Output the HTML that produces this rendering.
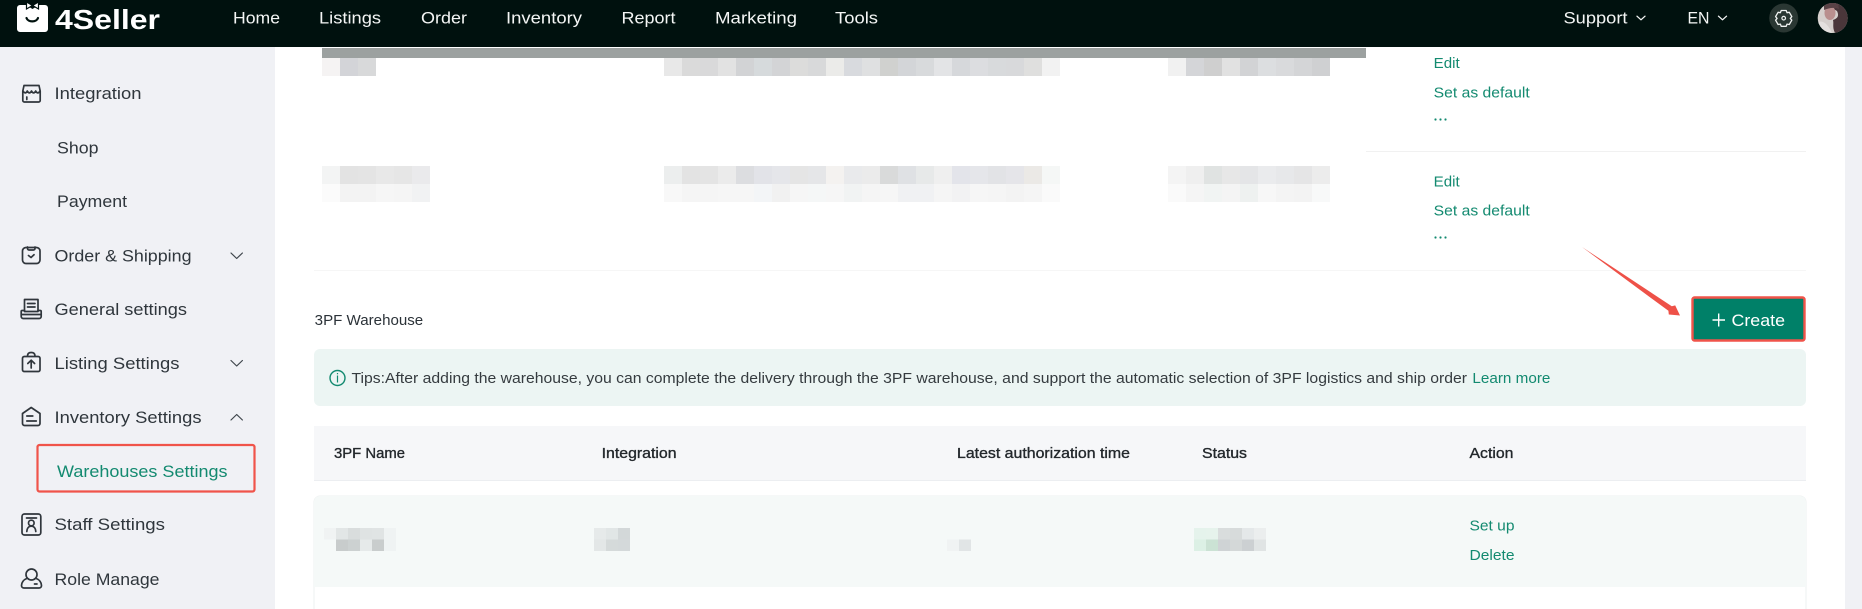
<!DOCTYPE html>
<html lang="en"><head><meta charset="utf-8"><title>4Seller</title>
<style>
html,body{margin:0;padding:0;background:#fff;width:1862px;height:609px;overflow:hidden}
svg{display:block}
text{font-family:"Liberation Sans",Arial,sans-serif;font-size:15px;fill:#2b3238}
.nav text{font-size:17px;fill:#f4f6f5}
.side text{font-size:17px;fill:#2f363c}
.g text,text.g{fill:#138a70}
.th text{fill:#23282c;font-size:15px;stroke:#23282c;stroke-width:.35px}
.b rect{width:18px;height:18px}
.c rect{width:12px;height:11.5px}
.ic{fill:none;stroke:#30363c;stroke-width:1.7;stroke-linecap:round;stroke-linejoin:round}
</style></head><body>
<svg width="1862" height="609" viewBox="0 0 1862 609" xmlns="http://www.w3.org/2000/svg">
<rect width="1862" height="609" fill="#fff"/>
<rect y="47" width="275" height="562" fill="#f0f1f5"/>
<rect x="1845" y="47" width="17" height="562" fill="#f0f1f5"/>
<rect width="1862" height="47" fill="#00110e"/>

<!-- logo -->
<path d="M20 5h6l6.500 4 6.500-4h6a3 3 0 0 1 3 3v21a3 3 0 0 1-3 3H20a3 3 0 0 1-3-3V8a3 3 0 0 1 3-3z" fill="#fff"/>
<path d="M26.500 2l6 3.500 6-3.500v7l-6-3.500-6 3.500z" fill="#fff" stroke="#00110e" stroke-width="1.200"/>
<path d="M26.500 18c1.500 4.500 10 4.500 11.500 0" fill="none" stroke="#00110e" stroke-width="2.200" stroke-linecap="round"/>
<text x="55" y="29" textLength="105" lengthAdjust="spacingAndGlyphs" style="font-size:28px;font-weight:bold;fill:#fff">4Seller</text>

<g class="nav">
<text x="233" y="23.500" textLength="47" lengthAdjust="spacingAndGlyphs">Home</text>
<text x="319" y="23.500" textLength="62" lengthAdjust="spacingAndGlyphs">Listings</text>
<text x="421" y="23.500" textLength="46" lengthAdjust="spacingAndGlyphs">Order</text>
<text x="506" y="23.500" textLength="76" lengthAdjust="spacingAndGlyphs">Inventory</text>
<text x="621.500" y="23.500" textLength="54" lengthAdjust="spacingAndGlyphs">Report</text>
<text x="715" y="23.500" textLength="82" lengthAdjust="spacingAndGlyphs">Marketing</text>
<text x="835" y="23.500" textLength="43" lengthAdjust="spacingAndGlyphs">Tools</text>
<text x="1563.500" y="23.500" textLength="64" lengthAdjust="spacingAndGlyphs">Support</text>
<text x="1687.500" y="23.500" textLength="22" lengthAdjust="spacingAndGlyphs">EN</text>
</g>
<path d="M1637 16.200l4 3.600 4-3.600M1718.500 16.200l4 3.600 4-3.600" fill="none" stroke="#f4f6f5" stroke-width="1.300" stroke-linecap="round" stroke-linejoin="round"/>

<!-- gear -->
<circle cx="1783.700" cy="18" r="14.500" fill="#2a3733"/>
<path d="M1781.200 10.500h5l.8 2.200 2.300-.4 2.500 4.300-1.500 1.800 1.500 1.800-2.500 4.300-2.300-.4-.8 2.200h-5l-.8-2.200-2.300.4-2.500-4.300 1.500-1.800-1.500-1.800 2.500-4.300 2.300.4z" fill="none" stroke="#f0f2f1" stroke-width="1.300" stroke-linejoin="round"/>
<circle cx="1783.700" cy="18.200" r="1.800" fill="none" stroke="#f0f2f1" stroke-width="1.200"/>

<!-- avatar -->
<clipPath id="av"><circle cx="1832.700" cy="18" r="15"/></clipPath>
<g clip-path="url(#av)">
<rect x="1817" y="3" width="31" height="30" fill="#d5cfcc"/>
<path d="M1826 3h22v30h-13c-3-6-1-9-2-13 3-1 7-3 4-9-3-2-8-3-11-8z" fill="#4a363a"/>
<ellipse cx="1830" cy="13" rx="5.500" ry="7" fill="#b98f8e"/>
<path d="M1824 3h14l1 6c-5-2-10-1-15 1z" fill="#5a4246"/>
<path d="M1818 22c5-2 10 2 14 11h-14z" fill="#e4e0de"/>
</g>

<!-- top table: grey bar and mosaic -->
<rect x="322" y="48" width="1044" height="10" fill="#9ca1a0"/>
<g class="b" transform="translate(0,58)">
<rect x="322" fill="#f5f3f3"/><rect x="340" fill="#d3d4d8"/><rect x="358" fill="#d8d9da"/>
<rect x="664" fill="#e8e8e8"/><rect x="682" fill="#dadada"/><rect x="700" fill="#d9d9da"/><rect x="718" fill="#e2e2e2"/><rect x="736" fill="#d2d3d5"/><rect x="754" fill="#d6dadc"/><rect x="772" fill="#d3d4d6"/><rect x="790" fill="#dcdcdb"/><rect x="808" fill="#d8d9da"/><rect x="826" fill="#ebebe9"/><rect x="844" fill="#d8dade"/><rect x="862" fill="#dfe0e1"/><rect x="880" fill="#d0d1cf"/><rect x="898" fill="#d3d5d8"/><rect x="916" fill="#d8dadc"/><rect x="934" fill="#e3e4e6"/><rect x="952" fill="#d6d8db"/><rect x="970" fill="#dcdde0"/><rect x="988" fill="#d8dadc"/><rect x="1006" fill="#d8d9db"/><rect x="1024" fill="#dfdfde"/><rect x="1042" fill="#f2f2f2"/>
<rect x="1168" fill="#f1f1f1"/><rect x="1186" fill="#d4d5d8"/><rect x="1204" fill="#cfcfcf"/><rect x="1222" fill="#e1e1e1"/><rect x="1240" fill="#d2d3d5"/><rect x="1258" fill="#dcdee0"/><rect x="1276" fill="#d9dadc"/><rect x="1294" fill="#d4d5d7"/><rect x="1312" fill="#cfd0d2"/>
</g>
<g class="b" transform="translate(0,166)">
<rect x="322" fill="#f3f4f4"/><rect x="340" fill="#e3e3e3"/><rect x="358" fill="#e4e4e4"/><rect x="376" fill="#e8e8e8"/><rect x="394" fill="#e6e6e6"/><rect x="412" fill="#eaeaec"/>
<rect x="664" fill="#eceeee"/><rect x="682" fill="#e3e3e3"/><rect x="700" fill="#e4e4e4"/><rect x="718" fill="#ebebeb"/><rect x="736" fill="#dcdde0"/><rect x="754" fill="#e2e3e8"/><rect x="772" fill="#e5e6ea"/><rect x="790" fill="#e5e5e5"/><rect x="808" fill="#e5e6e8"/><rect x="826" fill="#f4f2f0"/><rect x="844" fill="#e9eaec"/><rect x="862" fill="#ebebeb"/><rect x="880" fill="#d9dada"/><rect x="898" fill="#dfe1e4"/><rect x="916" fill="#e7e9e9"/><rect x="934" fill="#efefef"/><rect x="952" fill="#e3e4ea"/><rect x="970" fill="#e5e6ea"/><rect x="988" fill="#e2e3e6"/><rect x="1006" fill="#e5e5e9"/><rect x="1024" fill="#ebe9e6"/><rect x="1042" fill="#f5f7f6"/>
<rect x="1168" fill="#f4f4f4"/><rect x="1186" fill="#efefef"/><rect x="1204" fill="#e0e3e2"/><rect x="1222" fill="#e7e7e7"/><rect x="1240" fill="#e4e5e7"/><rect x="1258" fill="#eaebed"/><rect x="1276" fill="#e7e8ea"/><rect x="1294" fill="#e5e5e6"/><rect x="1312" fill="#ececec"/>
</g>
<g class="b" transform="translate(0,184)">
<rect x="322" fill="#fbfbfb"/><rect x="340" fill="#f3f3f3"/><rect x="358" fill="#f3f3f3"/><rect x="376" fill="#f6f6f6"/><rect x="394" fill="#f5f5f5"/><rect x="412" fill="#f1f2f3"/>
<rect x="664" fill="#f8f8f8"/><rect x="682" fill="#f5f5f5"/><rect x="700" fill="#f5f5f5"/><rect x="718" fill="#f6f6f6"/><rect x="736" fill="#f6f6f6"/><rect x="754" fill="#f3f5f7"/><rect x="772" fill="#f1f1f1"/><rect x="790" fill="#f6f6f6"/><rect x="808" fill="#f5f7f7"/><rect x="826" fill="#f6f6f6"/><rect x="844" fill="#f1f3f3"/><rect x="862" fill="#f5f5f5"/><rect x="880" fill="#f6f6f6"/><rect x="898" fill="#f0f1f3"/><rect x="916" fill="#f0f1f3"/><rect x="934" fill="#f5f5f5"/><rect x="952" fill="#f2f2f3"/><rect x="970" fill="#f6f6f6"/><rect x="988" fill="#f5f5f5"/><rect x="1006" fill="#f3f3f3"/><rect x="1024" fill="#f5f5f5"/><rect x="1042" fill="#fafafa"/>
<rect x="1168" fill="#fafafa"/><rect x="1186" fill="#f5f5f5"/><rect x="1204" fill="#f1f4f3"/><rect x="1222" fill="#f4f4f4"/><rect x="1240" fill="#eef1f0"/><rect x="1258" fill="#f7f7f7"/><rect x="1276" fill="#f4f4f4"/><rect x="1294" fill="#f3f3f3"/><rect x="1312" fill="#f8f9f9"/>
</g>

<g class="g">
<text x="1433.700" y="68" textLength="26" lengthAdjust="spacingAndGlyphs">Edit</text>
<text x="1433.700" y="97.500" textLength="96" lengthAdjust="spacingAndGlyphs">Set as default</text>
<text x="1433.700" y="186.500" textLength="26" lengthAdjust="spacingAndGlyphs">Edit</text>
<text x="1433.700" y="215.500" textLength="96" lengthAdjust="spacingAndGlyphs">Set as default</text>
</g>
<g fill="#138a70">
<circle cx="1435.500" cy="119.500" r="1.100"/><circle cx="1440.500" cy="119.500" r="1.100"/><circle cx="1445.500" cy="119.500" r="1.100"/>
<circle cx="1435.500" cy="237.500" r="1.100"/><circle cx="1440.500" cy="237.500" r="1.100"/><circle cx="1445.500" cy="237.500" r="1.100"/>
</g>
<rect x="1366" y="151" width="440" height="1" fill="#f1f1f1"/>
<rect x="314" y="270" width="1492" height="1" fill="#f6f6f6"/>

<!-- 3PF section -->
<text x="314.700" y="325" textLength="108.500" lengthAdjust="spacingAndGlyphs">3PF Warehouse</text>

<!-- arrow -->
<path d="M1582 247L1671.800 306.200 1675.200 305.400 1680 315.500 1668.800 314.500 1668.400 310.800z" fill="#ee5148"/>

<!-- create button -->
<rect x="1692.500" y="297.500" width="112" height="43" rx="2" fill="#008068" stroke="#f0544a" stroke-width="2.400"/>
<path d="M1712.500 320h12.500M1718.700 313.500v13" stroke="#fff" stroke-width="1.400" fill="none"/>
<text x="1731.500" y="326" textLength="53.500" lengthAdjust="spacingAndGlyphs" style="font-size:17px;fill:#fff">Create</text>

<!-- alert -->
<rect x="314" y="349" width="1492" height="57" rx="6" fill="#ecf5f3"/>
<circle cx="337.500" cy="378" r="7.500" fill="none" stroke="#138a70" stroke-width="1.400"/>
<path d="M337.500 375.500v7M337.500 373v1.200" stroke="#138a70" stroke-width="1.200" fill="none"/>
<text x="351.500" y="383" textLength="1115.500" lengthAdjust="spacingAndGlyphs" style="fill:#353b3f">Tips:After adding the warehouse, you can complete the delivery through the 3PF warehouse, and support the automatic selection of 3PF logistics and ship order</text>
<text class="g" x="1472.400" y="383" textLength="78" lengthAdjust="spacingAndGlyphs">Learn more</text>

<!-- table header -->
<rect x="314" y="426" width="1492" height="54" fill="#f6f7f9"/>
<rect x="314" y="480" width="1492" height="1" fill="#eceef1"/>
<g class="th">
<text x="334" y="458" textLength="71" lengthAdjust="spacingAndGlyphs">3PF Name</text>
<text x="601.600" y="458" textLength="75" lengthAdjust="spacingAndGlyphs">Integration</text>
<text x="957" y="458" textLength="173" lengthAdjust="spacingAndGlyphs">Latest authorization time</text>
<text x="1202" y="458" textLength="45" lengthAdjust="spacingAndGlyphs">Status</text>
<text x="1469.500" y="458" textLength="44" lengthAdjust="spacingAndGlyphs">Action</text>
</g>

<!-- row -->
<path d="M314 609V502a6 6 0 0 1 6-6h1480a6 6 0 0 1 6 6v107" fill="#fff" stroke="#eef1f1" stroke-width="1"/>
<path d="M314 587V502a6 6 0 0 1 6-6h1480a6 6 0 0 1 6 6v85z" fill="#f5f9f8"/>
<g class="c" transform="translate(0,528)">
<rect x="324" fill="#f0f3f3"/><rect x="336" fill="#e2e6e6"/><rect x="348" fill="#d9dddd"/><rect x="360" fill="#dfe3e3"/><rect x="372" fill="#e0e4e4"/><rect x="384" width="10" fill="#eff3f3"/>
<rect x="594" fill="#e6eaea"/><rect x="606" fill="#e1e6e6"/><rect x="618" fill="#d3d8d9"/>
<rect x="1194" fill="#e5f3ec"/><rect x="1206" fill="#e6f3ec"/><rect x="1218" fill="#d9dddd"/><rect x="1230" fill="#d7dbdb"/><rect x="1242" fill="#e4e8e9"/><rect x="1254" fill="#ebeeee"/>
</g>
<g class="c" transform="translate(0,539.500)">
<rect x="336" fill="#c8cccc"/><rect x="348" fill="#ccd1d1"/><rect x="360" fill="#e6eaea"/><rect x="372" fill="#c9cdcd"/><rect x="384" fill="#eff3f3"/>
<rect x="594" fill="#e3e7e7"/><rect x="606" fill="#d5dada"/><rect x="618" fill="#d4d9da"/>
<rect x="947" fill="#f0f3f3"/><rect x="959" fill="#e1e5e6"/>
<rect x="1194" fill="#dcf0e5"/><rect x="1206" fill="#cbe2d4"/><rect x="1218" fill="#cfd3d5"/><rect x="1230" fill="#d4d8d8"/><rect x="1242" fill="#ccd0d2"/><rect x="1254" fill="#e0e4e4"/>
</g>
<g class="g">
<text x="1469.500" y="530.500" textLength="45" lengthAdjust="spacingAndGlyphs">Set up</text>
<text x="1469.500" y="560" textLength="45" lengthAdjust="spacingAndGlyphs">Delete</text>
<text x="1469.500" y="620.500" textLength="96" lengthAdjust="spacingAndGlyphs">Set as default</text>
</g>

<!-- sidebar -->
<g class="side">
<text x="54.500" y="99" textLength="87" lengthAdjust="spacingAndGlyphs">Integration</text>
<text x="57" y="153.500" textLength="41.500" lengthAdjust="spacingAndGlyphs">Shop</text>
<text x="57" y="207" textLength="70" lengthAdjust="spacingAndGlyphs">Payment</text>
<text x="54.500" y="261.500" textLength="137" lengthAdjust="spacingAndGlyphs">Order &amp; Shipping</text>
<text x="54.500" y="315" textLength="132.500" lengthAdjust="spacingAndGlyphs">General settings</text>
<text x="54.500" y="369" textLength="125" lengthAdjust="spacingAndGlyphs">Listing Settings</text>
<text x="54.500" y="423" textLength="147" lengthAdjust="spacingAndGlyphs">Inventory Settings</text>
<text x="57" y="477" textLength="170.500" lengthAdjust="spacingAndGlyphs" style="fill:#138a70">Warehouses Settings</text>
<text x="54.500" y="530" textLength="110.500" lengthAdjust="spacingAndGlyphs">Staff Settings</text>
<text x="54.500" y="585" textLength="105" lengthAdjust="spacingAndGlyphs">Role Manage</text>
</g>
<rect x="37.500" y="445" width="217" height="46.500" rx="2" fill="none" stroke="#f0544a" stroke-width="2.200"/>
<path d="M231 253l5.700 5.500 5.700-5.500M231 360.500l5.700 5.500 5.700-5.500M231 420l5.700-5.500 5.700 5.500" fill="none" stroke="#3f464c" stroke-width="1.200" stroke-linecap="round" stroke-linejoin="round"/>

<!-- sidebar icons -->
<g class="ic">
<!-- shop -->
<path d="M24 85.500h15l1.200 5.500v9.500a1.500 1.500 0 0 1-1.500 1.500H24.300a1.500 1.500 0 0 1-1.500-1.500V91z"/>
<path d="M23 91c1.500 2.500 3.200 2.500 4.300 0 1.200 2.500 3 2.500 4.200 0 1.200 2.500 3 2.500 4.200 0 1.200 2.500 3 2.500 4.300 0"/>
<path d="M26.800 97v2.500"/>
<!-- order -->
<rect x="22.500" y="247.500" width="17.500" height="16" rx="3.500"/>
<path d="M27.500 247v1.500a1.500 1.500 0 0 0 1.500 1.500h4.500a1.500 1.500 0 0 0 1.500-1.500V247M28.500 255.500l2.500 2 3-2.800"/>
<!-- general -->
<path d="M24.500 299.500h13.500v12H24.500zM27.500 303.500h7.500M27.500 307h7.500"/>
<path d="M24.500 310.500h-2.300a1 1 0 0 0-1 1v5a2 2 0 0 0 2 2h16a2 2 0 0 0 2-2v-5a1 1 0 0 0-1-1H38M21.500 314.500h19.500"/>
<!-- listing -->
<rect x="22.500" y="356.500" width="17.500" height="15" rx="1.800"/>
<path d="M27.500 356c0-3 2-3.500 3.700-3.500s3.800.5 3.800 3.500M31.200 368v-7.500M27.800 363.500l3.400-3.300 3.400 3.300"/>
<!-- inventory -->
<path d="M31.200 407.500l8.800 6v10a2 2 0 0 1-2 2H24.500a2 2 0 0 1-2-2v-10z"/>
<path d="M26.800 416h6M26.800 421h9.500"/>
<!-- staff -->
<rect x="22" y="514" width="18.800" height="21" rx="2.500"/>
<path d="M26.500 518h10"/>
<circle cx="31.300" cy="523" r="2.800"/>
<path d="M26.800 531.500c0-3 1.700-5.300 4.500-5.300s4.500 2.300 4.500 5.300"/>
<!-- role -->
<circle cx="31.500" cy="574.500" r="5.500"/>
<path d="M26.700 578.500c-3.200 1.200-5.200 4-5.200 7 0 1.500 1 2.500 2.500 2.500h15c1.500 0 2.500-1 2.500-2.500 0-3-2-5.800-5.200-7"/>
<path d="M34.500 584h2.500"/>
</g>
</svg>
</body></html>
